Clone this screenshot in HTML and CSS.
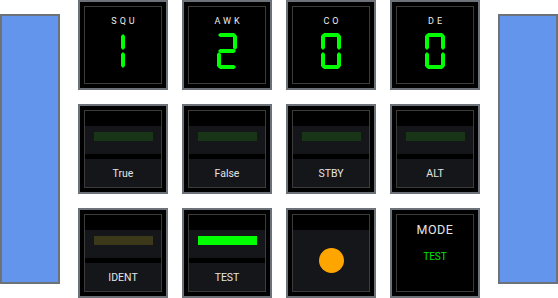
FILE: index.html
```html
<!DOCTYPE html>
<html lang="en">
<head>
    <meta charset="UTF-8">
    <title>Transponder Panel</title>
    <link rel="stylesheet" href="styles.css">
</head>
<body>
    <div class="panel">
        <div class="side"></div>

        <div class="tiles">
            <!-- squawk digits -->
            <div class="tile">
                <div class="frame digit-frame">
                    <div class="digit-label">SQU</div>
                    <svg class="digit" viewBox="0 0 20 36">
                        <polygon points="8,3 10,1 12,3 12,15 10,17 8,15"/>
                        <polygon points="8,21 10,19 12,21 12,33 10,35 8,33"/>
                    </svg>
                </div>
            </div>
            <div class="tile">
                <div class="frame digit-frame">
                    <div class="digit-label">AWK</div>
                    <svg class="digit" viewBox="0 0 20 36">
                        <polygon points="3,0 17,0 19,2 17,4 3,4 1,2"/>
                        <polygon points="16,3 18,1 20,3 20,15 18,17 16,15"/>
                        <polygon points="3,16 17,16 19,18 17,20 3,20 1,18"/>
                        <polygon points="0,21 2,19 4,21 4,33 2,35 0,33"/>
                        <polygon points="3,32 17,32 19,34 17,36 3,36 1,34"/>
                    </svg>
                </div>
            </div>
            <div class="tile">
                <div class="frame digit-frame">
                    <div class="digit-label">CO</div>
                    <svg class="digit" viewBox="0 0 20 36">
                        <polygon points="3,0 17,0 19,2 17,4 3,4 1,2"/>
                        <polygon points="0,3 2,1 4,3 4,15 2,17 0,15"/>
                        <polygon points="16,3 18,1 20,3 20,15 18,17 16,15"/>
                        <polygon points="0,21 2,19 4,21 4,33 2,35 0,33"/>
                        <polygon points="16,21 18,19 20,21 20,33 18,35 16,33"/>
                        <polygon points="3,32 17,32 19,34 17,36 3,36 1,34"/>
                    </svg>
                </div>
            </div>
            <div class="tile">
                <div class="frame digit-frame">
                    <div class="digit-label">DE</div>
                    <svg class="digit" viewBox="0 0 20 36">
                        <polygon points="3,0 17,0 19,2 17,4 3,4 1,2"/>
                        <polygon points="0,3 2,1 4,3 4,15 2,17 0,15"/>
                        <polygon points="16,3 18,1 20,3 20,15 18,17 16,15"/>
                        <polygon points="0,21 2,19 4,21 4,33 2,35 0,33"/>
                        <polygon points="16,21 18,19 20,21 20,33 18,35 16,33"/>
                        <polygon points="3,32 17,32 19,34 17,36 3,36 1,34"/>
                    </svg>
                </div>
            </div>

            <!-- mode buttons -->
            <div class="tile">
                <div class="frame">
                    <div class="band"></div>
                    <div class="lamp-area"><div class="lamp"></div></div>
                    <div class="label">True</div>
                </div>
            </div>
            <div class="tile">
                <div class="frame">
                    <div class="band"></div>
                    <div class="lamp-area"><div class="lamp"></div></div>
                    <div class="label">False</div>
                </div>
            </div>
            <div class="tile">
                <div class="frame">
                    <div class="band"></div>
                    <div class="lamp-area"><div class="lamp"></div></div>
                    <div class="label">STBY</div>
                </div>
            </div>
            <div class="tile">
                <div class="frame">
                    <div class="band"></div>
                    <div class="lamp-area"><div class="lamp"></div></div>
                    <div class="label">ALT</div>
                </div>
            </div>

            <div class="tile">
                <div class="frame">
                    <div class="band"></div>
                    <div class="lamp-area"><div class="lamp lamp-amber"></div></div>
                    <div class="label">IDENT</div>
                </div>
            </div>
            <div class="tile">
                <div class="frame">
                    <div class="band"></div>
                    <div class="lamp-area"><div class="lamp lamp-on"></div></div>
                    <div class="label">TEST</div>
                </div>
            </div>
            <div class="tile">
                <div class="frame">
                    <div class="band"></div>
                    <div class="knob-area"><div class="knob"></div></div>
                </div>
            </div>
            <div class="tile">
                <div class="frame mode-frame">
                    <div class="mode-title">MODE</div>
                    <div class="mode-value">TEST</div>
                </div>
            </div>
        </div>

        <div class="side"></div>
    </div>
</body>
</html>
```

FILE: styles.css
```css
* {
    margin: 0;
    padding: 0;
    box-sizing: border-box;
}

body {
    font-family: Roboto, "Liberation Sans", sans-serif;
    background: #fff;
}

.panel {
    display: flex;
    justify-content: center;
    align-items: center;
    gap: 18px;
    height: 298px;
}

.side {
    width: 60px;
    height: 270px;
    background: #6495ed;
    border: 2px solid #6c7278;
}

.tiles {
    display: grid;
    grid-template-columns: repeat(4, 90px);
    grid-template-rows: repeat(3, 90px);
    gap: 14px;
}

.tile {
    background: #000;
    border: 2px solid #6c7278;
    padding: 4px;
}

.frame {
    height: 100%;
    border: 1px solid #3c3c3c;
    display: flex;
    flex-direction: column;
}

/* digit tiles */
.digit-frame {
    align-items: center;
}

.digit-label {
    margin-top: 9px;
    font-size: 9px;
    line-height: 10px;
    letter-spacing: 3px;
    padding-left: 3px;
    color: #eee;
}

.digit {
    width: 20px;
    height: 36px;
    margin-top: 7px;
    fill: #00ff00;
}

/* button tiles */
.band {
    height: 15px;
}

.lamp-area {
    height: 28px;
    background: #141619;
    padding-top: 6px;
    margin-bottom: 5px;
}

.lamp {
    width: 59px;
    height: 9px;
    margin-left: 9px;
    background: #183518;
}

.lamp-amber {
    background: #3b3919;
}

.lamp-on {
    background: #00ff00;
}

.label {
    height: 28px;
    background: #141619;
    color: #e4e4e4;
    font-size: 10.5px;
    display: flex;
    align-items: center;
    justify-content: center;
}

.knob-area {
    flex: 1;
    background: #141619;
    display: flex;
    align-items: center;
    justify-content: center;
}

.knob {
    width: 25px;
    height: 25px;
    border-radius: 50%;
    background: #ffa500;
}

/* mode display */
.mode-frame {
    align-items: center;
}

.mode-title {
    margin-top: 7px;
    font-size: 12.5px;
    letter-spacing: 0.5px;
    color: #e4e4e4;
}

.mode-value {
    margin-top: 14px;
    font-size: 10px;
    color: #00e600;
}
```
